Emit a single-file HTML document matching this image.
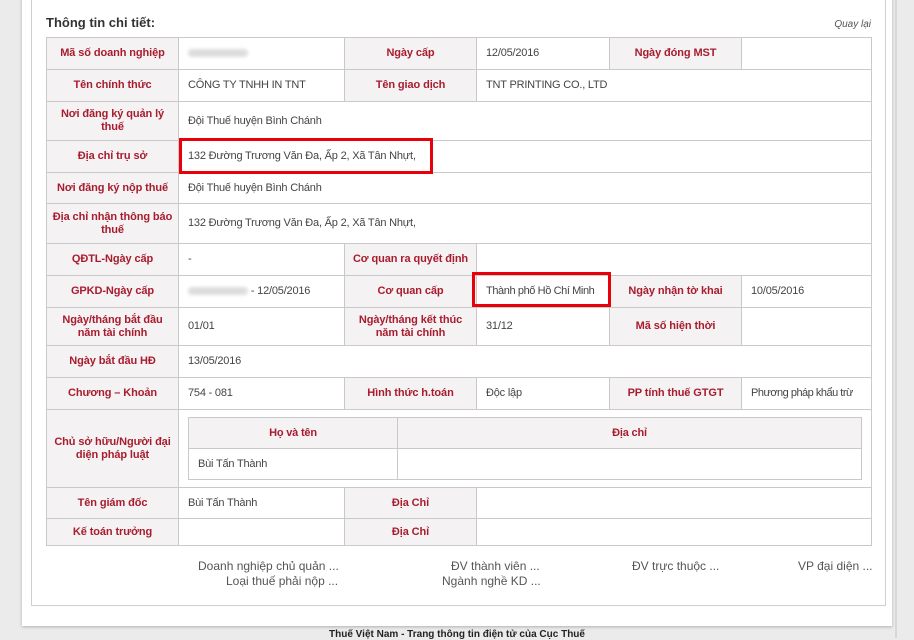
<!DOCTYPE html>
<html><head><meta charset="utf-8"><style>
html,body{margin:0;padding:0;width:914px;height:638px;overflow:hidden;background:#ebebeb;font-family:"Liberation Sans",Arial,sans-serif;}
.panel{position:absolute;left:22px;top:-10px;width:870px;height:636px;background:#fff;box-shadow:0 1px 3px rgba(0,0,0,.25);}
.inner{position:absolute;left:31px;top:-5px;width:853px;height:609px;border:1px solid #cfcfcf;background:#fff;}
.vline{position:absolute;left:895px;top:0;width:2px;height:638px;background:#d8d8d8;}
h3{position:absolute;left:46px;top:15px;margin:0;font-size:13px;font-weight:bold;color:#333;}
.back{position:absolute;right:43px;top:19px;font-size:10px;font-style:italic;color:#555;}
table.m{position:absolute;left:46px;top:37px;border-collapse:collapse;table-layout:fixed;width:825px;}
table.m td{border:1px solid #c9c9c9;font-size:11px;color:#444;padding:0 9px;line-height:13px;white-space:nowrap;overflow:hidden;letter-spacing:-0.2px;}
table.m td.l{background:#f4f2f3;color:#a81c2e;font-weight:bold;text-align:center;padding:0 4px;white-space:normal;letter-spacing:-0.1px;}
.blur{display:inline-block;width:60px;height:8px;background:#ddd;border-radius:4px;filter:blur(1.5px);vertical-align:middle;}
.red{position:absolute;border:3px solid #e8000b;}
table.s{border-collapse:collapse;width:100%;}
table.s td{border:1px solid #c9c9c9;height:30px;}
.links{position:absolute;font-size:12px;color:#555;}
.foot{position:absolute;left:0;width:914px;top:629px;text-align:center;font-size:10px;font-weight:bold;color:#222;}
</style></head><body>
<div class="panel"></div>
<div class="inner"></div>
<div class="vline"></div>
<h3>Thông tin chi tiết:</h3>
<div class="back">Quay lại</div>
<table class="m">
<colgroup><col style="width:132px"><col style="width:166px"><col style="width:132px"><col style="width:133px"><col style="width:132px"><col style="width:130px"></colgroup>
<tr style="height:32px"><td class="l">Mã số doanh nghiệp</td><td><span class="blur"></span></td><td class="l">Ngày cấp</td><td>12/05/2016</td><td class="l">Ngày đóng MST</td><td></td></tr>
<tr style="height:32px"><td class="l">Tên chính thức</td><td>CÔNG TY TNHH IN TNT</td><td class="l">Tên giao dịch</td><td colspan="3">TNT PRINTING CO., LTD</td></tr>
<tr style="height:39px"><td class="l">Nơi đăng ký quản lý thuế</td><td colspan="5">Đội Thuế huyện Bình Chánh</td></tr>
<tr style="height:32px"><td class="l">Địa chỉ trụ sở</td><td colspan="5">132 Đường Trương Văn Đa, Ấp 2, Xã Tân Nhựt,</td></tr>
<tr style="height:31px"><td class="l">Nơi đăng ký nộp thuế</td><td colspan="5">Đội Thuế huyện Bình Chánh</td></tr>
<tr style="height:40px"><td class="l">Địa chỉ nhận thông báo thuế</td><td colspan="5">132 Đường Trương Văn Đa, Ấp 2, Xã Tân Nhựt,</td></tr>
<tr style="height:32px"><td class="l">QĐTL-Ngày cấp</td><td>-</td><td class="l">Cơ quan ra quyết định</td><td colspan="3"></td></tr>
<tr style="height:32px"><td class="l">GPKD-Ngày cấp</td><td><span class="blur"></span> - 12/05/2016</td><td class="l">Cơ quan cấp</td><td style="letter-spacing:-0.4px">Thành phố Hồ Chí Minh</td><td class="l">Ngày nhận tờ khai</td><td>10/05/2016</td></tr>
<tr style="height:38px"><td class="l">Ngày/tháng bắt đầu năm tài chính</td><td>01/01</td><td class="l">Ngày/tháng kết thúc năm tài chính</td><td>31/12</td><td class="l">Mã số hiện thời</td><td></td></tr>
<tr style="height:32px"><td class="l">Ngày bắt đầu HĐ</td><td colspan="5">13/05/2016</td></tr>
<tr style="height:32px"><td class="l">Chương – Khoản</td><td>754 - 081</td><td class="l">Hình thức h.toán</td><td>Độc lập</td><td class="l">PP tính thuế GTGT</td><td style="padding:0 4px 0 9px;letter-spacing:-0.5px">Phương pháp khẩu trừ</td></tr>
<tr style="height:78px"><td class="l">Chủ sở hữu/Người đại diện pháp luật</td><td colspan="5" style="padding:0 9px"><table class="s"><tr style="background:#f4f2f3"><td style="width:190px;height:26px;text-align:center;color:#a81c2e;font-weight:bold">Họ và tên</td><td style="text-align:center;color:#a81c2e;font-weight:bold">Địa chỉ</td></tr><tr><td style="padding-left:9px">Bùi Tấn Thành</td><td></td></tr></table></td></tr>
<tr style="height:31px"><td class="l">Tên giám đốc</td><td>Bùi Tấn Thành</td><td class="l">Địa Chỉ</td><td colspan="3"></td></tr>
<tr style="height:27px"><td class="l">Kế toán trưởng</td><td></td><td class="l">Địa Chỉ</td><td colspan="3"></td></tr>
</table>
<div class="red" style="left:179px;top:138px;width:248px;height:30px"></div>
<div class="red" style="left:472px;top:272px;width:133px;height:29px"></div>
<div class="links" style="left:198px;top:559px">Doanh nghiệp chủ quản ...</div>
<div class="links" style="left:226px;top:574px">Loại thuế phải nộp ...</div>
<div class="links" style="left:451px;top:559px">ĐV thành viên ...</div>
<div class="links" style="left:442px;top:574px">Ngành nghề KD ...</div>
<div class="links" style="left:632px;top:559px">ĐV trực thuộc ...</div>
<div class="links" style="left:798px;top:559px">VP đại diện ...</div>
<div class="foot">Thuế Việt Nam - Trang thông tin điện tử của Cục Thuế</div>
</body></html>
